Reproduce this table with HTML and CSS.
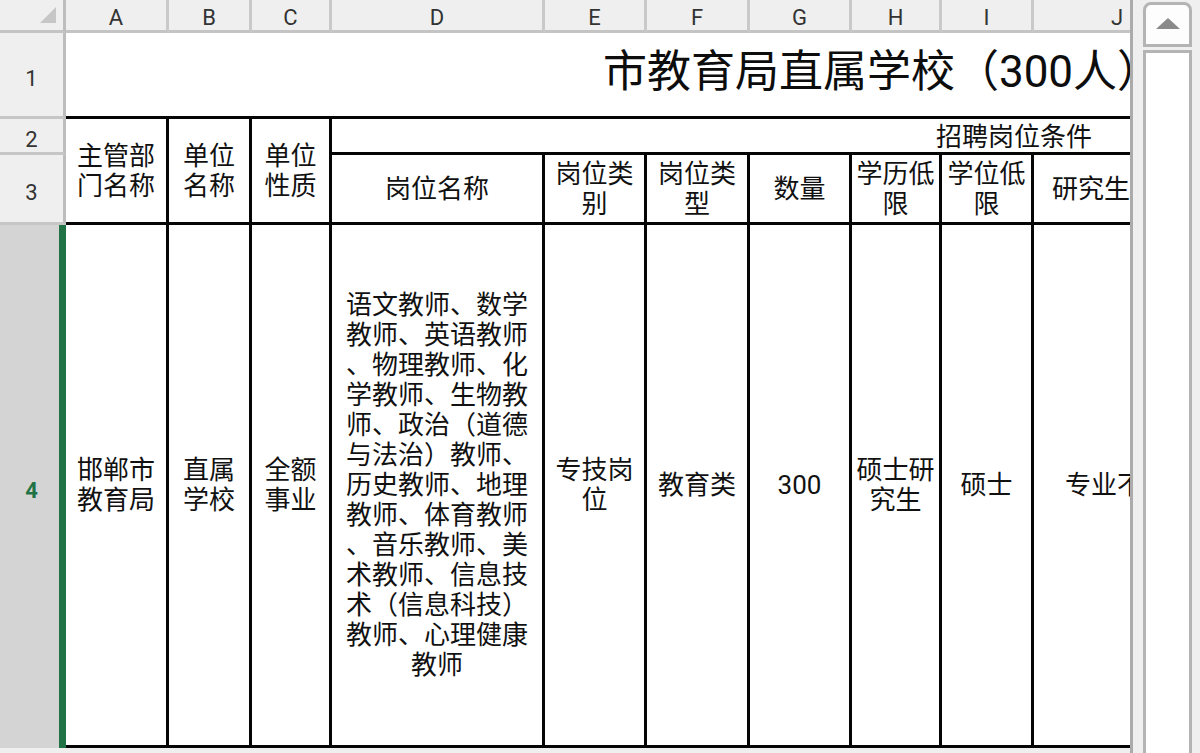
FILE: index.html
```html
<!DOCTYPE html>
<html lang="zh-CN">
<head>
<meta charset="utf-8">
<title>市教育局直属学校</title>
<link rel="stylesheet" href="styles.css">
</head>
<body>
<div class="app">
  <div class="viewport">
    <div class="sheet">
      <div class="ch corner"><span class="tri"></span></div>
      <div class="ch">A</div>
      <div class="ch">B</div>
      <div class="ch">C</div>
      <div class="ch">D</div>
      <div class="ch">E</div>
      <div class="ch">F</div>
      <div class="ch">G</div>
      <div class="ch">H</div>
      <div class="ch">I</div>
      <div class="ch">J</div>
      <div class="ch">K</div>
      <div class="ch">L</div>

      <div class="rh">1</div>
      <div class="cell title">市教育局直属学校（300人）</div>
      <div class="cell blank-r1"></div>

      <div class="rh">2</div>
      <div class="cell m23 col-a">主管部<br>门名称</div>
      <div class="cell m23 col-b">单位<br>名称</div>
      <div class="cell m23 col-c">单位<br>性质</div>
      <div class="cell cond">招聘岗位条件</div>

      <div class="rh">3</div>
      <div class="cell">岗位名称</div>
      <div class="cell">岗位类<br>别</div>
      <div class="cell">岗位类<br>型</div>
      <div class="cell">数量</div>
      <div class="cell">学历低<br>限</div>
      <div class="cell">学位低<br>限</div>
      <div class="cell">研究生专业</div>
      <div class="cell"></div>
      <div class="cell"></div>

      <div class="rh active">4</div>
      <div class="cell">邯郸市<br>教育局</div>
      <div class="cell">直属<br>学校</div>
      <div class="cell">全额<br>事业</div>
      <div class="cell">语文教师、数学<br>教师、英语教师<br>、物理教师、化<br>学教师、生物教<br>师、政治（道德<br>与法治）教师、<br>历史教师、地理<br>教师、体育教师<br>、音乐教师、美<br>术教师、信息技<br>术（信息科技）<br>教师、心理健康<br>教师</div>
      <div class="cell">专技岗<br>位</div>
      <div class="cell">教育类</div>
      <div class="cell">300</div>
      <div class="cell">硕士研<br>究生</div>
      <div class="cell">硕士</div>
      <div class="cell">专业不限</div>
      <div class="cell"></div>
      <div class="cell"></div>
    </div>
  </div>
  <div class="vscroll">
    <div class="vbtn"><span class="up"></span></div>
    <div class="vtrack"></div>
  </div>
</div>
</body>
</html>
```

FILE: styles.css
```css
html, body {
  margin: 0;
  padding: 0;
  width: 1200px;
  height: 753px;
  overflow: hidden;
  background: #efefef;
  font-family: Roboto, "Noto Sans CJK SC", sans-serif;
}

.app {
  display: flex;
  width: 1200px;
  height: 753px;
}

.viewport {
  width: 1130px;
  height: 753px;
  overflow: hidden;
  border-right: 3px solid #ababab;
  flex: none;
}

.sheet {
  display: grid;
  grid-template-columns: 66px 103px 83px 80px 213px 102px 103px 102px 90px 92px 169px 455px 41px;
  grid-template-rows: 33px 86px 36px 70px 523px;
  width: 1699px;
}

.ch {
  box-sizing: border-box;
  background: #efefef;
  border-right: 3px solid #c9c9c9;
  border-bottom: 3px solid #c4c4c4;
  color: #333;
  font-size: 22px;
  display: flex;
  align-items: center;
  justify-content: center;
  padding-top: 4px;
}

.corner {
  position: relative;
  border-right-color: #bdbdbd;
}

.tri {
  position: absolute;
  left: 40px;
  top: 7px;
  width: 0;
  height: 0;
  border-left: 16px solid transparent;
  border-bottom: 16px solid #c6c6c6;
}

.rh {
  grid-column: 1;
  box-sizing: border-box;
  background: #efefef;
  border-right: 3px solid #bdbdbd;
  border-bottom: 3px solid #c6c6c6;
  color: #333;
  font-size: 22px;
  display: flex;
  align-items: center;
  justify-content: center;
  padding-top: 8px;
}

.rh.active {
  background: #d4d4d4;
  color: #217346;
  font-weight: bold;
  border-right: 7px solid #217346;
  border-bottom: none;
  padding-left: 4px;
}

.cell {
  box-sizing: border-box;
  background: #fff;
  border-right: 3px solid #050505;
  border-bottom: 3px solid #050505;
  color: #111;
  font-size: 26px;
  line-height: 30px;
  display: flex;
  align-items: center;
  justify-content: center;
  text-align: center;
  overflow: hidden;
  white-space: nowrap;
  text-spacing-trim: space-all;
}

.title {
  grid-column: 2 / 13;
  border-right: none;
  font-size: 44px;
  line-height: 50px;
  color: #0d0d0d;
  padding-bottom: 6px;
  padding-left: 40px;
}

.blank-r1 {
  border-right: none;
}

.m23 {
  grid-row: 3 / 5;
}

.col-a { grid-column: 2; }
.col-b { grid-column: 3; }
.col-c { grid-column: 4; }

.cond {
  grid-column: 5 / 14;
  padding-top: 2px;
}

.vscroll {
  margin-left: 10px;
  width: 49px;
  padding-top: 2px;
  display: flex;
  flex-direction: column;
  gap: 3px;
  flex: none;
}

.vbtn {
  box-sizing: border-box;
  height: 45px;
  background: #fdfdfd;
  border: 3px solid #b4b4b4;
  border-radius: 8px 8px 0 0;
  display: flex;
  justify-content: center;
  padding-top: 13px;
}

.up {
  width: 0;
  height: 0;
  border-left: 12px solid transparent;
  border-right: 12px solid transparent;
  border-bottom: 11px solid #8a8a8a;
}

.vtrack {
  box-sizing: border-box;
  flex: 1;
  background: #fff;
  border: 3px solid #b4b4b4;
  border-bottom: none;
}
```
